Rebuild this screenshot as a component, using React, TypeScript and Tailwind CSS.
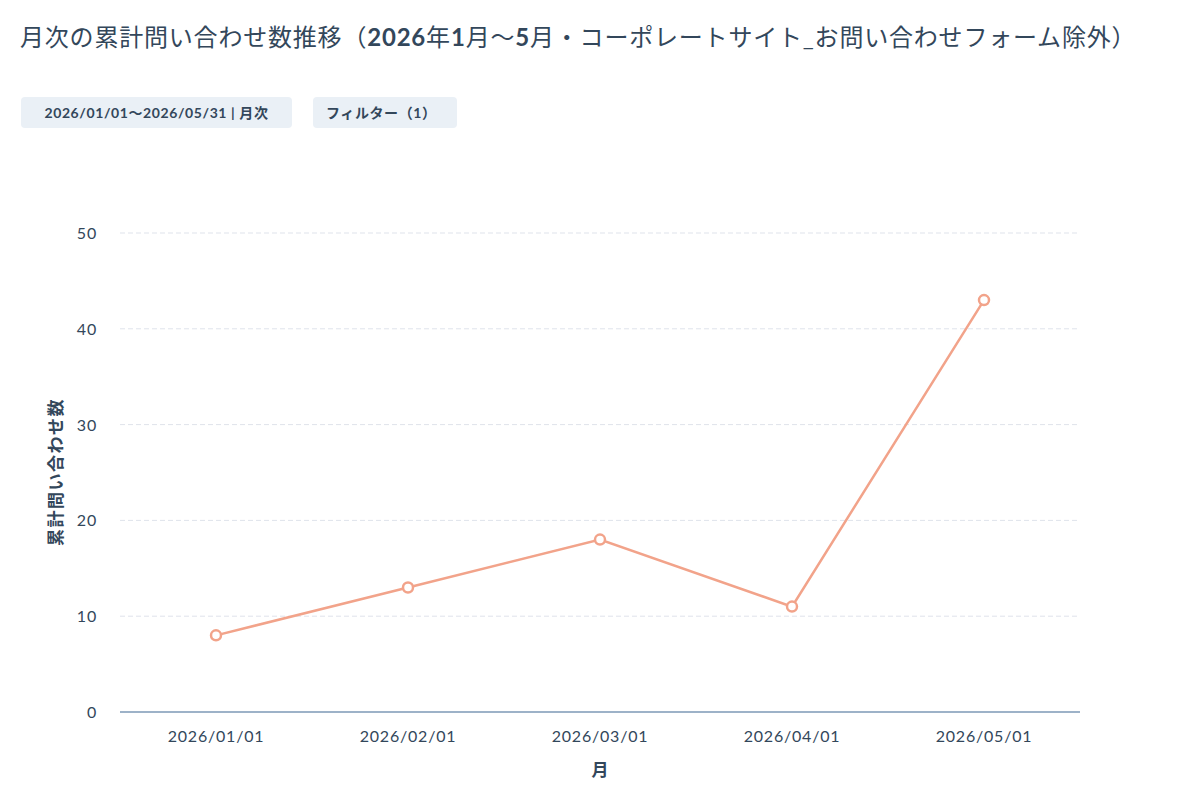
export default function App() {
  const vals = [8, 13, 18, 11, 43];
  const xs = [216, 408, 600, 792, 984];
  const y = (v: number) => 712 - v * 9.58;
  const pts = vals.map((v, i) => `${xs[i]},${y(v)}`).join(" ");
  const font = "Lato, 'Noto Sans CJK JP', sans-serif";
  return (
    <div className="w-[1178px] h-[792px] bg-white text-[#33475b] overflow-hidden" style={{ fontFamily: font }}>
      <div className="pl-[20px] pt-[21px] text-[24px] leading-[32px] tracking-[0.8px] whitespace-nowrap">
        月次の累計問い合わせ数推移（<span className="font-bold">2026</span>年<span className="font-bold">1</span>月〜<span className="font-bold">5</span>月・コーポレートサイト_お問い合わせフォーム除外）
      </div>
      <div className="flex gap-[21px] pl-[21px] mt-[44px]">
        <div className="h-[31px] w-[271px] justify-center flex items-center rounded-[4px] bg-[#eaf0f6] text-[14px] tracking-[0.6px] font-bold">2026/01/01〜2026/05/31 | 月次</div>
        <div className="h-[31px] px-[13px] flex items-center rounded-[4px] bg-[#eaf0f6] text-[14px] tracking-[0.6px] font-bold w-[144px]">フィルター（1）</div>
      </div>
      <svg width="1178" height="664" viewBox="0 128 1178 664" className="block" style={{ fontFamily: font }}>
        {[10, 20, 30, 40, 50].map((v) => (
          <line key={v} x1="120" x2="1080" y1={y(v)} y2={y(v)} stroke="#dfe3eb" strokeDasharray="5 3" strokeWidth="1" />
        ))}
        <line x1="120" x2="1080" y1="712" y2="712" stroke="#7c98b6" strokeWidth="1.5" />
        {[0, 10, 20, 30, 40, 50].map((v) => (
          <text key={v} x="97" y={y(v) + 6} textAnchor="end" fontSize="16" letterSpacing="0.8" fill="#33475b">{v}</text>
        ))}
        {xs.map((x, i) => (
          <text key={x} x={x} y="742" textAnchor="middle" fontSize="16" letterSpacing="0.8" fill="#33475b">{`2026/0${i + 1}/01`}</text>
        ))}
        <text x="600" y="776" textAnchor="middle" fontSize="17" fontWeight="bold" fill="#33475b">月</text>
        <text transform="translate(62 472) rotate(-90)" textAnchor="middle" fontSize="17" letterSpacing="1.5" fontWeight="bold" fill="#33475b">累計問い合わせ数</text>
        <polyline points={pts} fill="none" stroke="#f2a38a" strokeWidth="2.5" />
        {vals.map((v, i) => (
          <circle key={i} cx={xs[i]} cy={y(v)} r="5" fill="white" stroke="#f2a38a" strokeWidth="2.5" />
        ))}
      </svg>
    </div>
  );
}
